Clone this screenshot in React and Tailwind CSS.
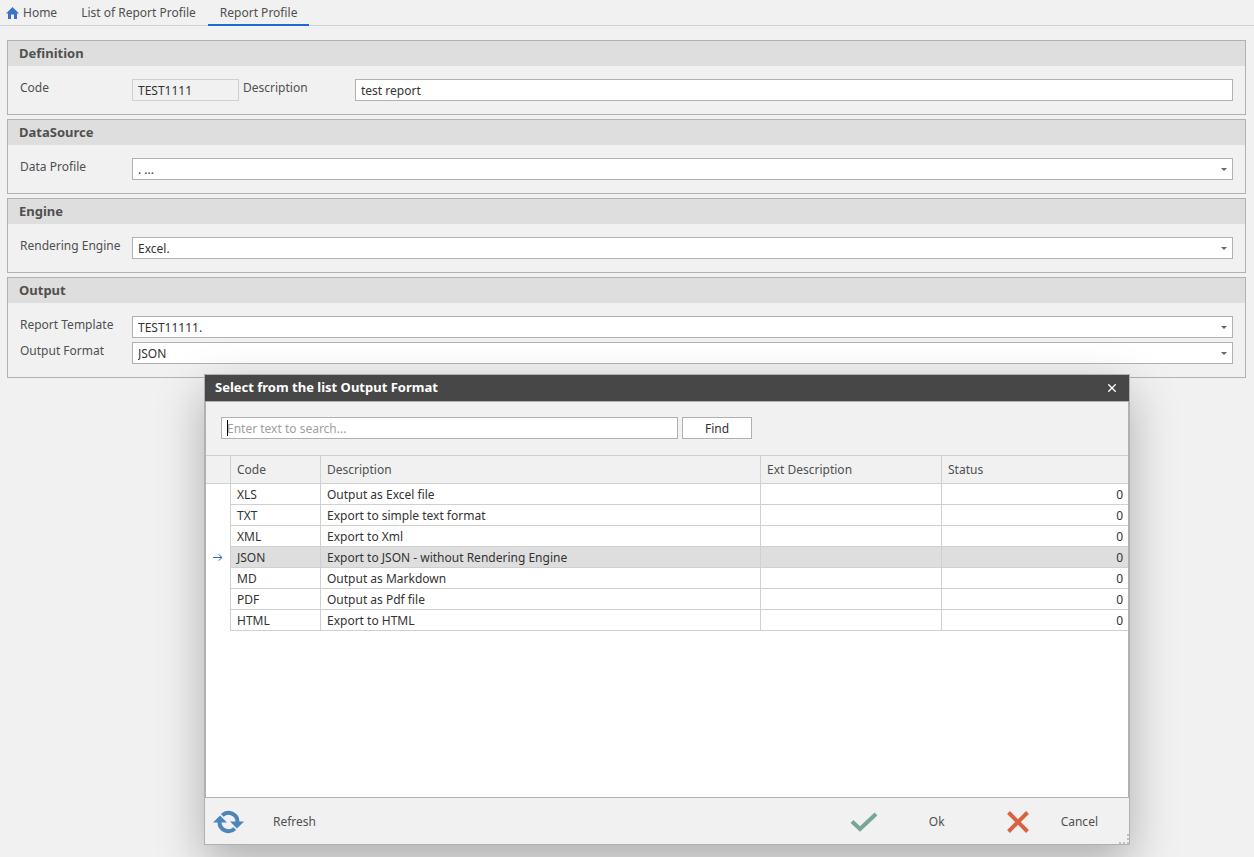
import { useState } from "react";

const formats = [
  { code: "XLS", description: "Output as Excel file", ext: "", status: 0 },
  { code: "TXT", description: "Export to simple text format", ext: "", status: 0 },
  { code: "XML", description: "Export to Xml", ext: "", status: 0 },
  { code: "JSON", description: "Export to JSON - without Rendering Engine", ext: "", status: 0 },
  { code: "MD", description: "Output as Markdown", ext: "", status: 0 },
  { code: "PDF", description: "Output as Pdf file", ext: "", status: 0 },
  { code: "HTML", description: "Export to HTML", ext: "", status: 0 },
];

const HomeIcon = () => (
  <svg width="13" height="12" viewBox="0 0 13 12" fill="#3b72c4" aria-hidden="true">
    <path d="M6.5 0 13 6.5H11V12H8V7.5H5V12H2V6.5H0Z" />
  </svg>
);

const CloseIcon = () => (
  <svg width="8" height="8" viewBox="0 0 8 8" stroke="#fff" strokeWidth="1.4" aria-hidden="true">
    <path d="M0.3 0.3 7.7 7.7M7.7 0.3 0.3 7.7" />
  </svg>
);

const RowArrow = () => (
  <svg className="mx-auto" width="10" height="7" viewBox="0 0 10 7" fill="none" stroke="#2a6fc9" aria-hidden="true">
    <path d="M0 3.5H9M5.5 0.3 9 3.5 5.5 6.7" />
  </svg>
);

const RefreshIcon = () => (
  <svg width="32" height="24" viewBox="0 0 32 24" aria-hidden="true">
    <g fill="none" stroke="#4c84bc" strokeWidth="4">
      <path d="M9.2 5.4A9 9 0 0 1 24.5 12" />
      <path d="M21.8 18.6A9 9 0 0 1 6.5 12" />
    </g>
    <path fill="#4c84bc" d="M0 12.5 7 5.5 14 12.5ZM17 11.5H31L24 18.5Z" />
  </svg>
);

const CheckIcon = () => (
  <svg width="28" height="20" viewBox="0 0 28 20" fill="none" stroke="#75a696" strokeWidth="4" aria-hidden="true">
    <path d="M2 9.5 10 17 26 2" />
  </svg>
);

const CrossIcon = () => (
  <svg width="22" height="22" viewBox="0 0 22 22" stroke="#d9623f" strokeWidth="4" aria-hidden="true">
    <path d="M1.5 1.5 20.5 20.5M20.5 1.5 1.5 20.5" />
  </svg>
);

const Panel = ({ title, children }) => (
  <section className="border border-[#b1b1b1]">
    <h2 className="h-[25px] bg-[#dedede] px-[11px] text-[13px] font-bold leading-6">{title}</h2>
    <div className="flex flex-col gap-1 px-3 py-[13px]">{children}</div>
  </section>
);

const Lookup = ({ id, label, value }) => (
  <div className="flex items-start">
    <label htmlFor={id} className="w-28 shrink-0 leading-[18px]">{label}</label>
    <div className="relative grow">
      <select id={id} className="block h-[22px] w-full appearance-none border border-[#b1b1b1] bg-white px-[5px] pt-px leading-5 text-[#333]">
        <option>{value}</option>
      </select>
      <svg className="pointer-events-none absolute right-[6px] top-[10px]" width="6" height="3" viewBox="0 0 6 3" fill="#666" aria-hidden="true">
        <path d="M0 0H6L3 3Z" />
      </svg>
    </div>
  </div>
);

const Tabs = () => (
  <nav className="flex h-[26px] border-b border-[#d2d2d2] leading-[26px]">
    <a href="#home" className="flex items-center gap-1 pl-[6px] pr-3">
      <HomeIcon />
      Home
    </a>
    <a href="#list" className="px-3">List of Report Profile</a>
    <a href="#profile" className="-mb-px border-b-2 border-[#1a6bd4] px-3">Report Profile</a>
  </nav>
);

const FormatDialog = () => {
  const [selected, setSelected] = useState("JSON");
  const [query, setQuery] = useState("");

  return (
    <div
      role="dialog"
      aria-labelledby="dialog-title"
      className="absolute left-[204px] top-[374px] w-[926px] border border-[#b1b1b1] bg-[#f1f1f1] shadow-[0_18px_44px_rgba(0,0,0,0.28)]"
    >
      <div className="flex h-[26px] items-center justify-between bg-[#474747] pl-[10px] pr-[13px] text-white">
        <h2 id="dialog-title" className="text-[13px] font-bold">Select from the list Output Format</h2>
        <button type="button" aria-label="Close"><CloseIcon /></button>
      </div>

      <div className="border border-[#b1b1b1]">
        <div className="flex gap-1 px-[15px] pb-4 pt-[15px]">
          <div className="relative w-[457px]">
            <input
              type="text"
              aria-label="Search"
              value={query}
              onChange={(e) => setQuery(e.target.value)}
              placeholder="Enter text to search..."
              className="block h-[22px] w-full border border-[#b1b1b1] bg-white px-[5px] outline-none placeholder:text-[#a0a0a0]"
            />
            {query === "" && <span className="pointer-events-none absolute left-[6px] top-[3px] h-4 w-px bg-black" />}
          </div>
          <button type="button" className="h-[22px] w-[70px] border border-[#b1b1b1] bg-white pt-px text-[#333]">Find</button>
        </div>

        <div className="h-[342px] bg-white">
          <table className="w-full table-fixed border-separate border-spacing-0 text-left">
            <colgroup>
              <col className="w-[25px]" />
              <col className="w-[90px]" />
              <col className="w-[440px]" />
              <col className="w-[181px]" />
              <col />
            </colgroup>
            <thead className="bg-[#f1f1f1]">
              <tr className="h-[29px]">
                <th className="border-y border-r border-[#d0d0d0] p-0" />
                <th className="border-y border-r border-[#d0d0d0] px-[6px] py-0 font-normal">Code</th>
                <th className="border-y border-r border-[#d0d0d0] px-[6px] py-0 font-normal">Description</th>
                <th className="border-y border-r border-[#d0d0d0] px-[6px] py-0 font-normal">Ext Description</th>
                <th className="border-y border-[#d0d0d0] px-[6px] py-0 font-normal">Status</th>
              </tr>
            </thead>
            <tbody className="text-[#333]">
              {formats.map((row) => (
                <tr
                  key={row.code}
                  onClick={() => setSelected(row.code)}
                  className={row.code === selected ? "h-[21px] bg-[#dedede]" : "h-[21px]"}
                >
                  <td className="border-r border-[#d0d0d0] bg-white p-0">{row.code === selected && <RowArrow />}</td>
                  <td className="border-b border-r border-[#d0d0d0] px-[6px] pb-0 pt-0.5">{row.code}</td>
                  <td className="border-b border-r border-[#d0d0d0] px-[6px] pb-0 pt-0.5">{row.description}</td>
                  <td className="border-b border-r border-[#d0d0d0] px-[6px] pb-0 pt-0.5">{row.ext}</td>
                  <td className="border-b border-[#d0d0d0] px-[5px] pb-0 pt-0.5 text-right">{row.status}</td>
                </tr>
              ))}
            </tbody>
          </table>
        </div>
      </div>

      <div className="flex h-[46px] items-center pl-2 pr-[31px] pt-px">
        <button type="button" className="flex items-center gap-7">
          <RefreshIcon />
          Refresh
        </button>
        <div className="ml-auto flex items-center gap-[62px]">
          <button type="button" className="flex items-center gap-[51px]">
            <CheckIcon />
            Ok
          </button>
          <button type="button" className="flex items-center gap-8">
            <CrossIcon />
            Cancel
          </button>
        </div>
      </div>
      <svg className="absolute bottom-0 right-0" width="10" height="10" viewBox="0 0 10 10" fill="#c0c0c0" aria-hidden="true">
        <path d="M8 0H10V2H8ZM8 4H10V6H8ZM8 8H10V10H8ZM4 8H6V10H4ZM0 8H2V10H0Z" />
      </svg>
    </div>
  );
};

const App = () => {
  return (
    <div className="relative min-h-screen overflow-hidden bg-[#f1f1f1] font-['Noto_Sans',sans-serif] text-xs text-[#505050]">
      <Tabs />

      <main className="flex flex-col gap-1 pl-[7px] pr-2 pt-[14px]">
        <Panel title="Definition">
          <div className="flex items-start">
            <label htmlFor="code" className="w-28 shrink-0 leading-[18px]">Code</label>
            <input
              id="code"
              readOnly
              defaultValue="TEST1111"
              className="h-[22px] w-[107px] border border-[#d0d0d0] bg-[#f1f1f1] px-[5px] text-[#333]"
            />
            <label htmlFor="description" className="ml-1 w-28 shrink-0 leading-[18px]">Description</label>
            <input
              id="description"
              defaultValue="test report"
              className="h-[22px] min-w-0 grow border border-[#b1b1b1] bg-white px-[5px] text-[#333]"
            />
          </div>
        </Panel>
        <Panel title="DataSource">
          <Lookup id="data-profile" label="Data Profile" value=". ..." />
        </Panel>
        <Panel title="Engine">
          <Lookup id="engine" label="Rendering Engine" value="Excel." />
        </Panel>
        <Panel title="Output">
          <Lookup id="template" label="Report Template" value="TEST11111." />
          <Lookup id="format" label="Output Format" value="JSON" />
        </Panel>
      </main>

      <FormatDialog />
    </div>
  );
};

export default App;
